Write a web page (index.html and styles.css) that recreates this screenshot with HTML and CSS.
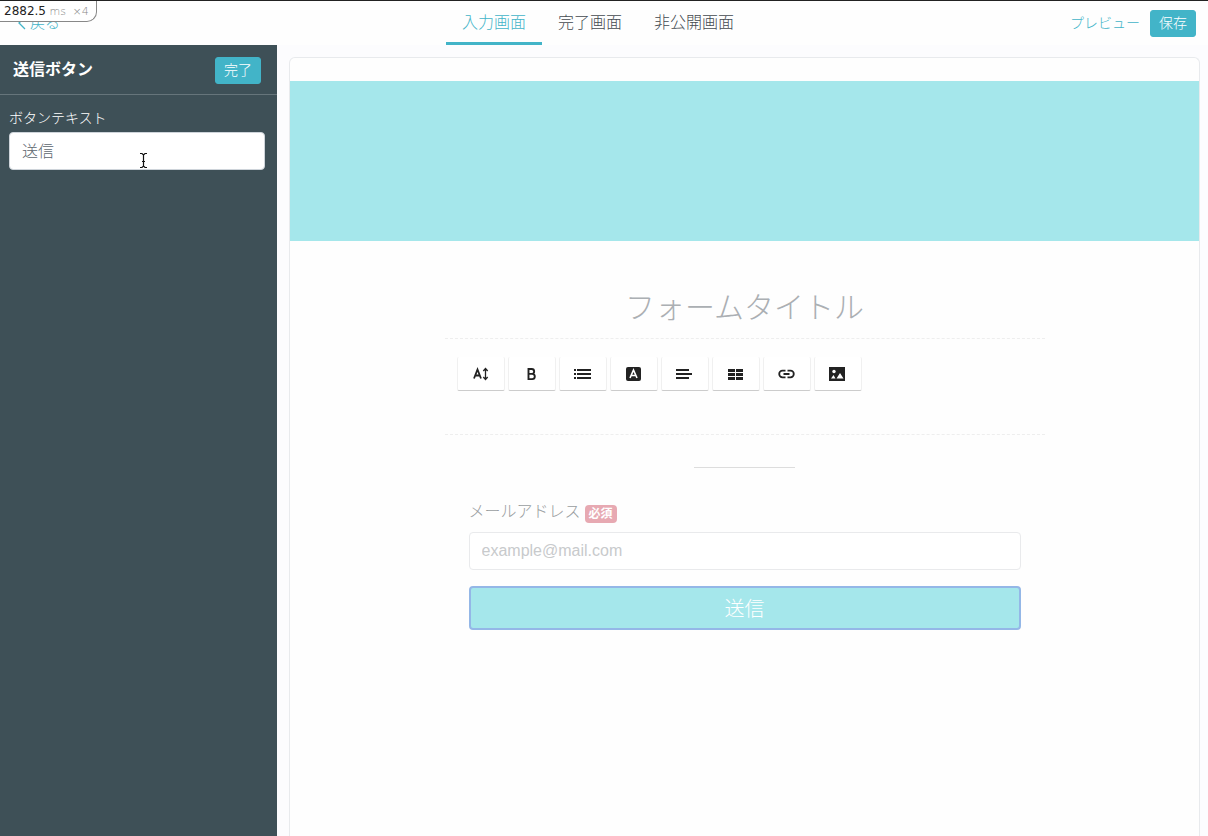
FILE: index.html
```html
<!DOCTYPE html>
<html lang="ja">
<head>
    <meta charset="UTF-8">
    <meta name="viewport" content="width=device-width, initial-scale=1.0">
    <title>フォーム編集</title>
    <link rel="stylesheet" href="styles.css">
</head>
<body>

<div class="profiler"><b>2882.5</b> <span>ms</span> <span class="profiler-count">×4</span></div>

<header class="topbar">
    <div class="topbar-side">
        <a class="back" href="#">
            <svg width="8" height="14" viewBox="0 0 8 14" aria-hidden="true"><path d="M7 1L1 7l6 6" fill="none" stroke="currentColor" stroke-width="1.300"/></svg>
            戻る
        </a>
    </div>
    <nav class="tabs">
        <a class="tab active" href="#">入力画面</a>
        <a class="tab" href="#">完了画面</a>
        <a class="tab" href="#">非公開画面</a>
    </nav>
    <div class="topbar-side topbar-actions">
        <a class="preview" href="#">プレビュー</a>
        <button class="btn" type="button">保存</button>
    </div>
</header>

<div class="layout">
    <aside class="sidebar">
        <div class="sidebar-header">
            <h2>送信ボタン</h2>
            <button class="btn" type="button">完了</button>
        </div>
        <div class="sidebar-body">
            <label for="buttonText">ボタンテキスト</label>
            <input type="text" id="buttonText" value="送信">
            <svg class="cursor" width="9" height="17" viewBox="0 0 9 17" aria-hidden="true"><path d="M1 1.500h2l1.500 1.500 1.500-1.500h2M1 15.500h2l1.500-1.500 1.500 1.500h2M4.500 3v11M3 9.500h3" fill="none" stroke="#111" stroke-width="1.200"/></svg>
        </div>
    </aside>

    <main class="canvas">
        <div class="panel">
            <div class="banner"></div>
            <form class="form">
                <h1 class="form-title">フォームタイトル</h1>
                <div class="description">
                    <div class="toolbar">
                        <button type="button" aria-label="文字サイズ">
                            <svg width="18" height="18" viewBox="0 0 18 18"><path d="M2 13.500L5.500 4.500 9 13.500M3.300 10.500h4.500" fill="none" stroke="#222" stroke-width="1.800"/><path d="M13.500 4v10M11.300 6l2.200-2.500L15.700 6M11.300 12l2.200 2.500 2.200-2.500" fill="none" stroke="#222" stroke-width="1.300"/></svg>
                        </button>
                        <button type="button" aria-label="太字">
                            <svg width="18" height="18" viewBox="0 0 18 18"><path d="M5.500 4h3.200a2.400 2.400 0 0 1 0 4.900H5.500zM5.500 8.900h3.700a2.600 2.600 0 0 1 0 5.200H5.500z" fill="none" stroke="#222" stroke-width="1.900"/></svg>
                        </button>
                        <button type="button" aria-label="リスト">
                            <svg width="18" height="18" viewBox="0 0 18 18"><path d="M0 4h2v2H0zM3 4h14v2H3zM0 8h2v2H0zM3 8h14v2H3zM0 12h2v2H0zM3 12h14v2H3z" fill="#222"/></svg>
                        </button>
                        <button type="button" aria-label="文字色">
                            <svg width="18" height="18" viewBox="0 0 18 18"><rect x="1" y="2" width="15" height="14" rx="2" fill="#222"/><path d="M5 13l3.500-8L12 13M6.300 10.500h4.400" fill="none" stroke="#fff" stroke-width="1.600"/></svg>
                        </button>
                        <button type="button" aria-label="配置">
                            <svg width="18" height="18" viewBox="0 0 18 18"><path d="M0 4h13v2H0zM0 8h16v2H0zM0 12h13v2H0z" fill="#222"/></svg>
                        </button>
                        <button type="button" aria-label="表">
                            <svg width="18" height="18" viewBox="0 0 18 18"><path d="M1 4h7v3H1zM9 4h7v3H9zM1 8h7v3H1zM9 8h7v3H9zM1 12h7v3H1zM9 12h7v3H9z" fill="#222"/></svg>
                        </button>
                        <button type="button" aria-label="リンク">
                            <svg width="18" height="18" viewBox="0 0 18 18"><path d="M7.500 5.700h-3a3.300 3.300 0 0 0 0 6.600h3M9.500 5.700h3a3.300 3.300 0 0 1 0 6.600h-3M5.500 9h6" fill="none" stroke="#222" stroke-width="1.800"/></svg>
                        </button>
                        <button type="button" aria-label="画像">
                            <svg width="18" height="18" viewBox="0 0 18 18"><path d="M0 2h16v14H0z" fill="#222"/><circle cx="5" cy="6.500" r="1.700" fill="#fff"/><path d="M2 13.500l2.500-3.500 2 3.500zM7.500 13.500l3.500-5.500 3.500 5.500z" fill="#fff"/></svg>
                        </button>
                    </div>
                </div>
                <hr class="divider">
                <div class="field">
                    <div class="field-label">
                        <label for="email">メールアドレス</label>
                        <span class="badge">必須</span>
                    </div>
                    <input type="email" id="email" placeholder="example@mail.com">
                </div>
                <button class="submit" type="button">送信</button>
            </form>
        </div>
    </main>
</div>

</body>
</html>
```
FILE: styles.css
```css
* {
    box-sizing: border-box;
}

body {
    display: flex;
    flex-direction: column;
    min-height: 100vh;
    margin: 0;
    font-family: "Liberation Sans", "Noto Sans CJK JP", sans-serif;
    font-size: 16px;
    font-weight: 300;
    line-height: 24px;
    color: #495057;
    background-color: #fcfcfe;
}

a {
    color: #42b4c8;
    text-decoration: none;
}

button,
input {
    font-family: inherit;
    font-weight: inherit;
}

.profiler {
    position: absolute;
    top: 1px;
    left: 0;
    z-index: 1;
    height: 21px;
    padding: 0 7px 0 4px;
    border: 1px solid #888;
    border-top: 0;
    border-left: 0;
    border-radius: 0 0 10px 0;
    background-color: #fff;
    color: #888;
    font-family: "DejaVu Sans", sans-serif;
    font-size: 11px;
    line-height: 20px;
}

.profiler b {
    color: #222;
    font-size: 12px;
    font-weight: normal;
}

.profiler-count {
    margin-left: 3px;
}

.topbar {
    display: flex;
    height: 45px;
    padding: 0 12px 0 0;
    border-top: 1px solid #222;
    background-color: #fefefe;
}

.topbar-side {
    display: flex;
    flex: 1;
    align-items: center;
}

.topbar-actions {
    justify-content: flex-end;
    gap: 10px;
    font-size: 14px;
}

.back {
    display: flex;
    align-items: center;
    gap: 4px;
    padding-left: 18px;
    font-size: 15px;
}

.tabs {
    display: flex;
}

.tab {
    padding: 10px 16px 0;
    border-bottom: 3px solid transparent;
    color: #444a50;
}

.tab.active {
    border-color: #42b4c8;
    color: #42b4c8;
}

.btn {
    height: 27px;
    padding: 0 8px;
    border: 1px solid #42b4c8;
    border-radius: 3px;
    background-color: #42b4c8;
    color: #fff;
    font-size: 14px;
    line-height: 20px;
}

.layout {
    display: flex;
    flex: 1;
}

.sidebar {
    width: 277px;
    background-color: #3e5057;
    color: #fff;
}

.sidebar-header {
    display: flex;
    align-items: center;
    justify-content: space-between;
    height: 50px;
    padding: 1px 16px 0 13px;
    border-bottom: 1px solid #66757b;
}

.sidebar-header h2 {
    margin: 0;
    font-size: 16px;
}

.sidebar-body {
    position: relative;
    padding: 11px 12px 12px 9px;
}

.sidebar-body label {
    display: block;
    margin-bottom: 2px;
    font-size: 14px;
}

.sidebar-body input,
.field input {
    display: block;
    width: 100%;
    height: 38px;
    padding: 0 12px;
    border: 1px solid #ced4da;
    border-radius: 4px;
    background-color: #fff;
    color: #5c666e;
    font-size: 16px;
}

.sidebar-body input {
    padding-bottom: 2px;
}

.cursor {
    position: absolute;
    top: 57px;
    left: 139px;
}

.canvas {
    display: flex;
    flex: 1;
    padding: 12px 8px 0 12px;
}

.panel {
    flex: 1;
    padding-top: 23px;
    border: 1px solid #e8eaed;
    border-bottom: 0;
    border-radius: 6px 6px 0 0;
    background-color: #fefefe;
}

.banner {
    height: 160px;
    background-color: #a5e7eb;
}

.form {
    max-width: 600px;
    margin: 0 auto;
    padding-top: 43px;
}

.form-title {
    margin: 0;
    padding-bottom: 6px;
    border-bottom: 1px dashed #eee;
    color: #abafb3;
    font-size: 30px;
    font-weight: inherit;
    line-height: 48px;
    text-align: center;
}

.description {
    height: 96px;
    padding: 18px 12px 0;
    border-bottom: 1px dashed #eee;
}

.toolbar {
    display: flex;
    gap: 3px;
}

.toolbar button {
    display: flex;
    align-items: center;
    justify-content: center;
    width: 48px;
    height: 34px;
    padding: 0;
    border: 1px solid #f0f0f0;
    border-top: 0;
    border-bottom-color: #ccc;
    border-radius: 2px;
    background-color: #fff;
}

.divider {
    width: 101px;
    margin: 32px auto;
    border: 0;
    border-top: 1px solid #ddd;
}

.field,
.submit {
    width: calc(100% - 48px);
    margin: 0 24px;
}

.field-label {
    display: flex;
    align-items: center;
    gap: 4px;
    margin-bottom: 8px;
    color: #999da0;
}

.badge {
    margin-top: 3px;
    padding: 0 4px;
    border-radius: 4px;
    background-color: #e7a9b2;
    color: #fff;
    font-size: 12px;
    font-weight: bold;
    line-height: 18px;
}

.field input {
    border-color: #e9eaec;
}

.field input::placeholder {
    color: #c8cacc;
}

.submit {
    height: 44px;
    margin-top: 16px;
    padding-bottom: 3px;
    border: 2px solid #94b7e7;
    border-radius: 4px;
    background-color: #a5e7eb;
    color: #fff;
    font-size: 20px;
}
```
